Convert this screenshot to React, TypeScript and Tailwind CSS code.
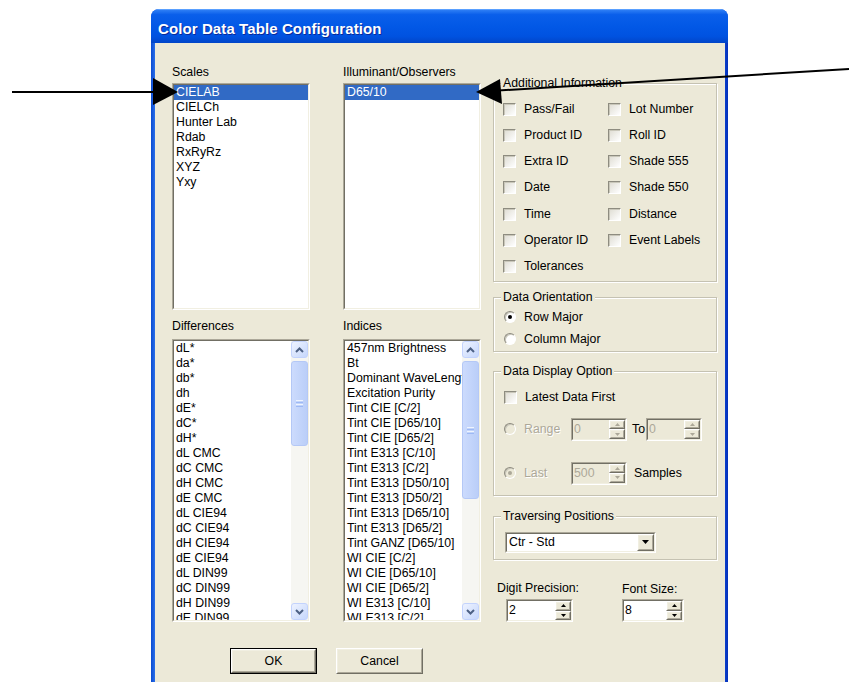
import React from "react";

type Node = React.ReactNode;

/* ---------- classic 3D frames ---------- */

function Sunken({ className = "", inner = "", children }: { className?: string; inner?: string; children?: Node }) {
  return (
    <div className={`border border-t-[#ACA899] border-l-[#ACA899] border-b-white border-r-white ${className}`}>
      <div className={`h-full w-full border border-t-[#716F64] border-l-[#716F64] border-b-[#F1EFE2] border-r-[#F1EFE2] ${inner}`}>
        {children}
      </div>
    </div>
  );
}

function Raised({ className = "", children }: { className?: string; children?: Node }) {
  return (
    <div className={`border border-t-white border-l-white border-b-[#716F64] border-r-[#716F64] bg-[#ECE9D8] ${className}`}>
      <div className="h-full w-full border border-t-[#F1EFE2] border-l-[#F1EFE2] border-b-[#ACA899] border-r-[#ACA899] flex items-center justify-center">
        {children}
      </div>
    </div>
  );
}

/* ---------- XP scrollbar ---------- */

function ScrollArrow({ up }: { up?: boolean }) {
  return (
    <div className="h-[17px] w-[17px] shrink-0 rounded-[3px] border border-[#C3D3FD] bg-[linear-gradient(135deg,#EEF3FF,#C6D7FC)] flex items-center justify-center">
      <svg width="9" height="6" viewBox="0 0 9 6">
        <path d={up ? "M1 5 L4.5 1.5 L8 5" : "M1 1 L4.5 4.5 L8 1"} fill="none" stroke="#4D6185" strokeWidth="2" />
      </svg>
    </div>
  );
}

function ScrollBar({ thumb }: { thumb: string }) {
  return (
    <div className="w-[17px] h-full shrink-0 flex flex-col bg-[#F6F6F2]">
      <ScrollArrow up />
      <div className="flex-1 pt-[3px]">
        <div
          className={`${thumb} rounded-[3px] border border-[#B4C8F6] bg-[linear-gradient(90deg,#CCDBFD,#BACEF8)] flex flex-col items-center justify-center gap-[1px]`}
        >
          <span className="block w-[7px] h-[1px] bg-[#EEF4FE]" />
          <span className="block w-[7px] h-[1px] bg-[#9DB9F5]" />
          <span className="block w-[7px] h-[1px] bg-[#EEF4FE]" />
          <span className="block w-[7px] h-[1px] bg-[#9DB9F5]" />
        </div>
      </div>
      <ScrollArrow />
    </div>
  );
}

/* ---------- list boxes ---------- */

function ListBox({ items, selected, thumb }: { items: string[]; selected?: number; thumb?: string }) {
  return (
    <Sunken className="h-full" inner="bg-white flex overflow-hidden">
      <div className="flex-1 min-w-0 overflow-hidden">
        {items.map((t, i) => (
          <div
            key={t}
            className={`h-[15px] leading-[15px] pl-[2px] whitespace-nowrap ${i === selected ? "bg-[#316AC5] text-white" : ""}`}
          >
            {t}
          </div>
        ))}
      </div>
      {thumb && <ScrollBar thumb={thumb} />}
    </Sunken>
  );
}

/* ---------- small controls ---------- */

function CheckBox() {
  return (
    <span className="block w-[13px] h-[13px] shrink-0 border border-t-[#8E8C80] border-l-[#8E8C80] border-b-white border-r-white bg-[linear-gradient(135deg,#DEDCD2,#FFFFFF)] shadow-[inset_1px_1px_0_#C9C7BA]" />
  );
}

function Radio({ checked, disabled }: { checked?: boolean; disabled?: boolean }) {
  return (
    <span
      className={`flex w-[12px] h-[12px] shrink-0 rounded-full border border-t-[#8E8C80] border-l-[#8E8C80] border-b-white border-r-white items-center justify-center shadow-[inset_1px_1px_0_#C9C7BA] ${
        disabled ? "bg-[#ECE9D8]" : "bg-white"
      }`}
    >
      {checked && <span className={`block w-[4px] h-[4px] rounded-full ${disabled ? "bg-[#ACA899]" : "bg-black"}`} />}
    </span>
  );
}

function Check({ label }: { label: string }) {
  return (
    <div className="flex items-center h-[20px]">
      <CheckBox />
      <span className="ml-[8px] whitespace-nowrap">{label}</span>
    </div>
  );
}

function SpinButton({ up, disabled }: { up?: boolean; disabled?: boolean }) {
  return (
    <Raised className="flex-1 min-h-0">
      <svg width="5" height="3" viewBox="0 0 5 3">
        <path d={up ? "M0 3 L2.5 0 L5 3Z" : "M0 0 L5 0 L2.5 3Z"} fill={disabled ? "#ACA899" : "#000"} />
      </svg>
    </Raised>
  );
}

function Spinner({ value, width, disabled }: { value: string; width: string; disabled?: boolean }) {
  return (
    <Sunken className={`${width} h-[23px]`} inner={`flex ${disabled ? "bg-[#ECE9D8] text-[#ACA899]" : "bg-white"}`}>
      <div className="flex-1 pl-[1px] leading-[19px]">{value}</div>
      <div className="w-[16px] flex flex-col">
        <SpinButton up disabled={disabled} />
        <SpinButton disabled={disabled} />
      </div>
    </Sunken>
  );
}

function Group({ title, className, children }: { title: string; className: string; children?: Node }) {
  return (
    <fieldset className={`border border-[#C5C2B2] shadow-[inset_1px_1px_0_#FFFFFF,1px_1px_0_#FFFFFF] ${className}`}>
      <legend className="ml-[7px] px-[2px] h-[15px] leading-[15px] bg-[#ECE9D8]">{title}</legend>
      {children}
    </fieldset>
  );
}

/* ---------- data ---------- */

const scales = ["CIELAB", "CIELCh", "Hunter Lab", "Rdab", "RxRyRz", "XYZ", "Yxy"];
const differences = [
  "dL*", "da*", "db*", "dh", "dE*", "dC*", "dH*",
  "dL CMC", "dC CMC", "dH CMC", "dE CMC",
  "dL CIE94", "dC CIE94", "dH CIE94", "dE CIE94",
  "dL DIN99", "dC DIN99", "dH DIN99", "dE DIN99",
];
const indices = [
  "457nm Brightness", "Bt", "Dominant WaveLength", "Excitation Purity",
  "Tint CIE [C/2]", "Tint CIE [D65/10]", "Tint CIE [D65/2]",
  "Tint E313 [C/10]", "Tint E313 [C/2]", "Tint E313 [D50/10]", "Tint E313 [D50/2]",
  "Tint E313 [D65/10]", "Tint E313 [D65/2]", "Tint GANZ [D65/10]",
  "WI CIE [C/2]", "WI CIE [D65/10]", "WI CIE [D65/2]", "WI E313 [C/10]", "WI E313 [C/2]",
];
const extras = [
  "Pass/Fail", "Lot Number", "Product ID", "Roll ID", "Extra ID", "Shade 555",
  "Date", "Shade 550", "Time", "Distance", "Operator ID", "Event Labels", "Tolerances",
];

/* ---------- page ---------- */

export default function App() {
  return (
    <div className="relative w-[849px] h-[682px] overflow-hidden bg-white font-['Liberation_Sans',Arial,sans-serif] text-[12.3px] leading-[15px] text-black">
      <div className="pl-[151px] pt-[9px]">
        <div className="w-[577px] h-[700px] flex flex-col rounded-t-[8px] overflow-hidden bg-[#0A4FD6]">
          {/* title bar */}
          <div className="h-[34px] shrink-0 flex items-center pl-[7px] pt-[4px] border-t border-[#5AA0FF] bg-[linear-gradient(to_bottom,#2E7EF5_0%,#0A5FEA_14%,#0258E6_50%,#0052E0_80%,#0145C8_100%)]">
            <span className="text-white font-bold text-[15px] [text-shadow:1px_1px_0_#0A2A9A] tracking-[0.1px]">
              Color Data Table Configuration
            </span>
          </div>

          <div className="flex-1 flex">
            <div className="w-[4px] bg-[linear-gradient(90deg,#0A4AD0,#2A6FEA)]" />

            {/* client area */}
            <div className="w-[570px] bg-[#ECE9D8] flex flex-col">
              <div className="flex pl-[17px]">
                {/* scales / differences */}
                <div className="w-[138px] pt-[22px] flex flex-col">
                  <div className="h-[15px] mb-[3px]">Scales</div>
                  <div className="h-[227px]">
                    <ListBox items={scales} selected={0} />
                  </div>
                  <div className="h-[15px] mt-[9px] mb-[5px]">Differences</div>
                  <div className="h-[283px]">
                    <ListBox items={differences} thumb="h-[85px]" />
                  </div>
                </div>

                {/* illuminants / indices */}
                <div className="w-[138px] ml-[33px] pt-[22px] flex flex-col">
                  <div className="h-[15px] mb-[3px]">Illuminant/Observers</div>
                  <div className="h-[227px]">
                    <ListBox items={["D65/10"]} selected={0} />
                  </div>
                  <div className="h-[15px] mt-[9px] mb-[5px]">Indices</div>
                  <div className="h-[283px]">
                    <ListBox items={indices} thumb="h-[138px]" />
                  </div>
                </div>

                {/* options */}
                <div className="w-[224px] ml-[12px] pt-[32.5px] flex flex-col">
                  <Group title="Additional Information" className="h-[206.5px]">
                    <div className="grid grid-cols-[105px_1fr] gap-y-[6.3px] mt-[8.5px] pl-[9px]">
                      {extras.map((e) => (
                        <Check key={e} label={e} />
                      ))}
                    </div>
                  </Group>

                  <Group title="Data Orientation" className="h-[62px] mt-[8px]">
                    <div className="flex flex-col gap-[4px] mt-[3.3px] pl-[10px]">
                      <div className="flex items-center h-[18px]">
                        <Radio checked />
                        <span className="ml-[8px]">Row Major</span>
                      </div>
                      <div className="flex items-center h-[18px]">
                        <Radio />
                        <span className="ml-[8px]">Column Major</span>
                      </div>
                    </div>
                  </Group>

                  <Group title="Data Display Option" className="h-[132.5px] mt-[11.5px]">
                    <div className="flex flex-col pl-[10px]">
                      <div className="flex items-center h-[20px] mt-[8.8px]">
                        <CheckBox />
                        <span className="ml-[8px]">Latest Data First</span>
                      </div>
                      <div className="flex items-center h-[23px] mt-[10.7px]">
                        <Radio disabled />
                        <span className="ml-[8px] w-[47px] text-[#ACA899] [text-shadow:1px_1px_0_#FFFFFF]">Range</span>
                        <Spinner value="0" width="w-[56px]" disabled />
                        <span className="w-[19px] pl-[5px]">To</span>
                        <Spinner value="0" width="w-[56px]" disabled />
                      </div>
                      <div className="flex items-center h-[23px] mt-[20.7px]">
                        <Radio checked disabled />
                        <span className="ml-[8px] w-[47px] text-[#ACA899] [text-shadow:1px_1px_0_#FFFFFF]">Last</span>
                        <Spinner value="500" width="w-[56px]" disabled />
                        <span className="ml-[7px]">Samples</span>
                      </div>
                    </div>
                  </Group>

                  <Group title="Traversing Positions" className="h-[51.5px] mt-[12.5px]">
                    <div className="pl-[11px] mt-[8px]">
                      <Sunken className="w-[151px] h-[21px]" inner="bg-white flex">
                        <div className="flex-1 pl-[2px] leading-[17px]">Ctr - Std</div>
                        <Raised className="w-[17px] h-full">
                          <svg width="7" height="4" viewBox="0 0 7 4">
                            <path d="M0 0 L7 0 L3.5 4Z" fill="#000" />
                          </svg>
                        </Raised>
                      </Sunken>
                    </div>
                  </Group>

                  <div className="flex mt-[20.5px] pl-[4px]">
                    <div className="w-[125px] flex flex-col">
                      <div className="h-[15px]">Digit Precision:</div>
                      <div className="pl-[9px] mt-[3.5px]">
                        <Spinner value="2" width="w-[67px]" />
                      </div>
                    </div>
                    <div className="flex flex-col">
                      <div className="h-[15px] mt-[1px]">Font Size:</div>
                      <div className="mt-[2.5px]">
                        <Spinner value="8" width="w-[62px]" />
                      </div>
                    </div>
                  </div>
                </div>
              </div>

              {/* dialog buttons */}
              <div className="flex pl-[75px] mt-[26px]">
                <div className="border border-black">
                  <Raised className="w-[85px] h-[24px]">OK</Raised>
                </div>
                <Raised className="w-[87px] h-[26px] ml-[19px]">Cancel</Raised>
              </div>
            </div>

            <div className="w-[3px] bg-[linear-gradient(90deg,#0A3FCC,#0530B8)]" />
          </div>
        </div>
      </div>

      {/* callout arrows */}
      <svg className="absolute inset-0 pointer-events-none" width="849" height="682" viewBox="0 0 849 682">
        <line x1="12" y1="92" x2="156" y2="92" stroke="#000" strokeWidth="2" />
        <polygon points="153,78 153,105 178,92" fill="#000" />
        <line x1="849" y1="69" x2="498" y2="90.6" stroke="#000" strokeWidth="2" />
        <polygon points="476,92 500,79 502,104" fill="#000" />
      </svg>
    </div>
  );
}
